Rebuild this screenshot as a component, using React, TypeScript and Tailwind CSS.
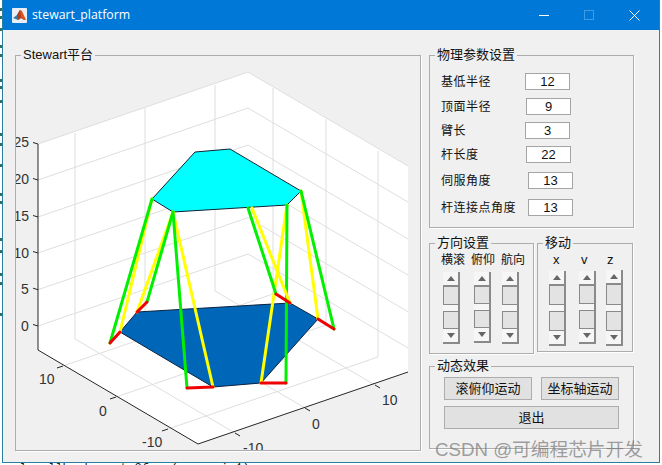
import React from 'react';

const FONT = "font-['Liberation_Sans','Noto_Sans_CJK_SC',sans-serif]";

// bits of the editor text that peek out left of the window
const stripMarks = [
  'mt-[8px]', 'mt-[5px]', 'mt-[9px]', 'mt-[14px]', 'mt-[6px]', 'mt-[22px]', 'mt-[4px]', 'mt-[11px]', 'mt-[30px]',
  'mt-[7px]', 'mt-[18px]', 'mt-[26px]', 'mt-[5px]', 'mt-[34px]', 'mt-[9px]', 'mt-[20px]', 'mt-[6px]', 'mt-[28px]',
];

const zLevels = [326, 289.7, 253, 217, 180];
const leftTicks = [[63, 366], [116, 397], [168, 429]];
const rightTicks = [[235, 433], [305, 408], [375, 385]];

const legs = [
  { red: [120, 332, 110, 343], green: [110, 343, 152, 199], yellow: [120, 332, 152, 199] },
  { red: [137, 312, 147, 302], green: [147, 302, 173, 212], yellow: [137, 312, 173, 212] },
  { red: [213, 387, 187, 388], green: [187, 388, 173, 212], yellow: [213, 387, 173, 212] },
  { red: [261, 383, 286, 383], green: [286, 383, 287, 205], yellow: [261, 383, 287, 205] },
  { red: [318, 319, 334, 329], green: [334, 329, 301, 191], yellow: [318, 319, 301, 191] },
  { red: [290, 303, 276, 294], green: [276, 294, 248, 208], yellow: [290, 303, 252, 208] },
];

const Plot: React.FC = () => (
  <svg viewBox="16 56 404 394" className="block h-[394px] w-[404px]">
    <polygon points="38,144 248,72 408,166 408,372 198,444 38,350" fill="#fff" />
    <g stroke="#dedede" strokeWidth="1" fill="none">
      <polyline points="38,144 248,72 408,166" />
      {zLevels.map((y) => (
        <polyline key={y} points={`38,${y} 248,${y - 72} 408,${y + 22}`} />
      ))}
      {leftTicks.map(([x, y]) => (
        <polyline key={x} points={`${x},${y} ${x + 210},${y - 72} ${x + 210},${y - 278}`} />
      ))}
      {rightTicks.map(([x, y]) => (
        <polyline key={x} points={`${x},${y} ${x - 160},${y - 94} ${x - 160},${y - 300}`} />
      ))}
    </g>

    <g stroke="#262626" strokeWidth="1" fill="none">
      <polyline points="38,144 38,350 198,444 408,372" />
      {[144, ...zLevels].map((y) => (
        <line key={y} x1="38" y1={y} x2="33" y2={y - 1.5} />
      ))}
      {leftTicks.map(([x, y]) => (
        <line key={x} x1={x} y1={y} x2={x - 6} y2={y + 2} />
      ))}
      {rightTicks.map(([x, y]) => (
        <line key={x} x1={x} y1={y} x2={x + 5} y2={y + 3} />
      ))}
    </g>

    <polygon points="137,312 290,303 318,319 261,383 213,387 120,332" fill="#0066b8" stroke="#0b2240" strokeWidth="1" />
    <polygon points="195,152 230,149 301,191 287,205 173,212 152,199" fill="#00ffff" stroke="#123" strokeWidth="1" />

    {legs.map((leg, i) => (
      <g key={i} strokeWidth="3" strokeLinecap="round">
        <line x1={leg.yellow[0]} y1={leg.yellow[1]} x2={leg.yellow[2]} y2={leg.yellow[3]} stroke="#ffff00" />
        <line x1={leg.green[0]} y1={leg.green[1]} x2={leg.green[2]} y2={leg.green[3]} stroke="#00f000" />
        <line x1={leg.red[0]} y1={leg.red[1]} x2={leg.red[2]} y2={leg.red[3]} stroke="#f00000" />
      </g>
    ))}

    <g fill="#333" fontSize="14" fontFamily="'Liberation Sans', sans-serif">
      <text x="13.5" y="147">25</text>
      <text x="13.5" y="184">20</text>
      <text x="13.5" y="221">15</text>
      <text x="13.5" y="258">10</text>
      <text x="21" y="294">5</text>
      <text x="21" y="331">0</text>
      <text x="39" y="384">10</text>
      <text x="99" y="416">0</text>
      <text x="142" y="447">-10</text>
      <text x="243" y="453">-10</text>
      <text x="312" y="429">0</text>
      <text x="382" y="405">10</text>
    </g>
  </svg>
);

const Panel: React.FC<{ title: string; className: string; children: React.ReactNode }> = ({ title, className, children }) => (
  <div className={`relative border border-[#adadad] shadow-[1px_1px_0_#fff] ${className}`}>
    <span className="absolute -top-[9px] left-[5px] bg-[#f0f0f0] px-[2px] text-[13px] leading-[16px] whitespace-nowrap text-[#111]">
      {title}
    </span>
    {children}
  </div>
);

const params = [
  { label: '基低半径', value: '12', row: 'mt-[17px]', label_w: 'w-[84px]' },
  { label: '顶面半径', value: '9', row: 'mt-[8px]', label_w: 'w-[85px]' },
  { label: '臂长', value: '3', row: 'mt-[7px]', label_w: 'w-[84px]' },
  { label: '杆长度', value: '22', row: 'mt-[7px]', label_w: 'w-[85px]' },
  { label: '伺服角度', value: '13', row: 'mt-[9px]', label_w: 'w-[87px]' },
  { label: '杆连接点角度', value: '13', row: 'mt-[10px]', label_w: 'w-[87px]' },
];

const Scroll: React.FC<{ className: string }> = ({ className }) => (
  <div className={`flex w-[17px] flex-col ${className}`}>
    <div className="flex h-[15px] items-center justify-center border-r-2 border-b-2 border-r-[#8a8a8a] border-b-[#8a8a8a] bg-[#f6f6f6]">
      <svg width="8" height="5" viewBox="0 0 8 5"><polygon points="4,0 8,5 0,5" fill="#666" /></svg>
    </div>
    <div className="flex-1 border-r-2 border-b border-l border-[#8a8a8a] bg-[#e3e3e3]" />
    <div className="h-[6px] border-r-2 border-[#8a8a8a] bg-[#f6f6f6]" />
    <div className="flex-1 border-t border-r-2 border-l border-[#8a8a8a] bg-[#e3e3e3]" />
    <div className="flex h-[16px] items-center justify-center border-t border-r-2 border-b-2 border-[#8a8a8a] bg-[#f6f6f6]">
      <svg width="8" height="5" viewBox="0 0 8 5"><polygon points="0,0 8,0 4,5" fill="#666" /></svg>
    </div>
  </div>
);

const btn = 'flex h-[23px] items-center justify-center border border-[#adadad] bg-[#e1e1e1] text-[13px] text-[#111]';

export default function App() {
  return (
    <div className={`relative h-[465px] w-[662px] overflow-hidden bg-white ${FONT}`}>
      <div className="absolute top-0 left-0 flex w-[2px] flex-col">
        {stripMarks.map((m, i) => (
          <div key={i} className={`h-[3px] w-[2px] bg-[#2f6f66] ${m}`} />
        ))}
      </div>
      <div className="absolute top-[462px] left-[5px] font-['Liberation_Mono',monospace] text-[12px] leading-[14px] whitespace-nowrap text-[#222]">
        cal callback = str2func(varargin{1});
      </div>

      <div className="relative ml-[2px] flex h-[463px] w-[658px] flex-col border-x border-b border-[#2b7f9e]">
        {/* title bar */}
        <div className="flex h-[30px] shrink-0 items-center bg-[#0078d7]">
          <svg width="15" height="15" viewBox="0 0 15 15" className="ml-[9px]">
            <rect width="15" height="15" rx="1" fill="#e8eef4" />
            <polygon points="1,10 5,7 8,2 12,12 9,10 6,12" fill="#2f7fb5" />
            <polygon points="8,2 10,3 14,12 12,12 9,10 6,8" fill="#d9541e" />
            <polygon points="5,7 8,2 9,10 6,12" fill="#b33a1a" />
          </svg>
          <span className="ml-[5px] font-['Open_Sans',sans-serif] text-[12.3px] text-white">stewart_platform</span>
          <div className="ml-auto flex items-center">
            <div className="h-px w-[10px] bg-white" />
            <div className="ml-[35px] h-[10px] w-[10px] border border-white/25" />
            <svg width="11" height="11" viewBox="0 0 11 11" className="mr-[19px] ml-[35px]">
              <path d="M0.5 0.5 L10.5 10.5 M10.5 0.5 L0.5 10.5" stroke="#fff" strokeWidth="1" />
            </svg>
          </div>
        </div>

        {/* body */}
        <div className="flex flex-1 bg-[#f0f0f0] pt-[25px] pl-[12px]">
          <Panel title="Stewart平台" className="h-[396px] w-[406px]">
            <Plot />
          </Panel>

          <div className="ml-[8px] flex w-[205px] flex-col">
            <Panel title="物理参数设置" className="h-[173px] w-[205px]">
              {params.map((p) => (
                <div key={p.label} className={`flex items-center pl-[11px] ${p.row}`}>
                  <span className={`${p.label_w} text-[12px] leading-[14px] tracking-[0.5px] whitespace-nowrap text-[#111]`}>{p.label}</span>
                  <div className="flex h-[17px] w-[45px] items-center justify-center border border-[#a5a5a5] bg-white text-[13px] text-[#111]">
                    {p.value}
                  </div>
                </div>
              ))}
            </Panel>

            <div className="mt-[15px] flex items-start gap-[3px]">
              <Panel title="方向设置" className="h-[111px] w-[105px]">
                <div className="mt-[9px] flex gap-[6px] pl-[11px] text-[12px] leading-[14px] whitespace-nowrap text-[#111]">
                  <span className="w-[24px]">横滚</span>
                  <span className="w-[24px]">俯仰</span>
                  <span className="w-[24px]">航向</span>
                </div>
                <div className="mt-[5px] flex pl-[13px]">
                  <Scroll className="h-[72px]" />
                  <Scroll className="ml-[14px] h-[71px]" />
                  <Scroll className="ml-[11px] h-[72px]" />
                </div>
              </Panel>
              <Panel title="移动" className="h-[109px] w-[96px]">
                <div className="mt-[9px] flex pl-[15px] text-[13px] leading-[14px] text-[#111]">
                  <span className="w-[28px]">x</span>
                  <span className="w-[26px]">v</span>
                  <span>z</span>
                </div>
                <div className="mt-[3px] flex items-start pl-[11px]">
                  <Scroll className="mt-[1px] h-[75px]" />
                  <Scroll className="mt-[1px] ml-[13px] h-[73px]" />
                  <Scroll className="ml-[10px] h-[76px]" />
                </div>
              </Panel>
            </div>

            <Panel title="动态效果" className="mt-[12px] h-[83px] w-[205px]">
              <div className="mt-[10px] flex pl-[14px]">
                <div className={`${btn} w-[88px]`}>滚俯仰运动</div>
                <div className={`${btn} ml-[9px] w-[78px]`}>坐标轴运动</div>
              </div>
              <div className="mt-[6px] pl-[14px]">
                <div className={`${btn} w-[175px]`}>退出</div>
              </div>
            </Panel>
          </div>
        </div>
      </div>

      {/* watermark */}
      <div className="absolute top-[438px] left-[435px] text-[18.7px] leading-[24px] whitespace-nowrap text-[#777]/70">
        CSDN @可编程芯片开发
      </div>
    </div>
  );
}
